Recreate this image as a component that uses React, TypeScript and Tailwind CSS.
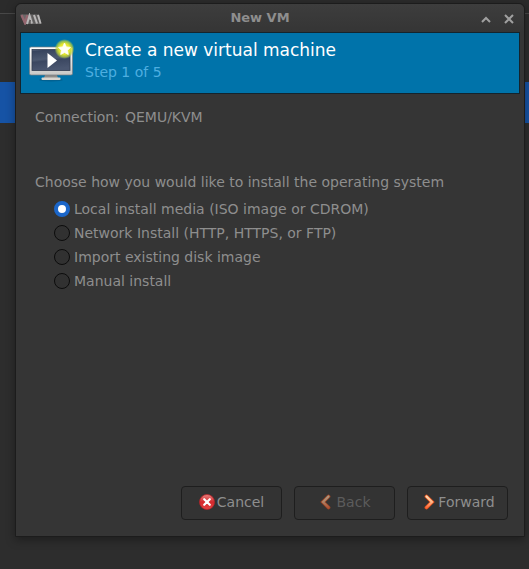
import React, { useState } from 'react';

const INSTALL_METHODS = [
  { id: 'local', label: 'Local install media (ISO image or CDROM)' },
  { id: 'network', label: 'Network Install (HTTP, HTTPS, or FTP)' },
  { id: 'import', label: 'Import existing disk image' },
  { id: 'manual', label: 'Manual install' },
];

const VmLogo = () => (
  <svg width="22" height="12" viewBox="0 0 22 12" aria-hidden="true">
    <path d="M0.500 1.500H19L21.500 11H4.500Z" fill="#6a6868" />
    <path d="M1.500 2L5 10L7.500 2" fill="none" stroke="#94666f" strokeWidth="2.400" />
    <path d="M7 11L9.500 2.500L12 10.500M14 2L17 10.500M18 2L20.500 10.500" fill="none" stroke="#b9b7b7" strokeWidth="2" />
    <path d="M9.500 11L10.500 7M12 2L14.500 10.500M16 2L19 10.500" fill="none" stroke="#5a5858" strokeWidth="1" />
  </svg>
);

const MonitorIcon = () => (
  <svg width="48" height="48" viewBox="0 0 48 48" className="shrink-0" aria-hidden="true">
    <defs>
      <linearGradient id="screen" x1="0" y1="0" x2="0.2" y2="1">
        <stop offset="0" stopColor="#5f6b82" />
        <stop offset="0.1" stopColor="#37445e" />
        <stop offset="0.5" stopColor="#4c5971" />
        <stop offset="0.6" stopColor="#3b4761" />
        <stop offset="1" stopColor="#4a5670" />
      </linearGradient>
      <linearGradient id="bezel" x1="0" y1="0" x2="0" y2="1">
        <stop offset="0" stopColor="#ffffff" />
        <stop offset="1" stopColor="#c8c8c6" />
      </linearGradient>
      <radialGradient id="glow">
        <stop offset="0" stopColor="#f7f45a" />
        <stop offset="0.55" stopColor="#e0e52c" />
        <stop offset="0.8" stopColor="#bfd53a" stopOpacity="0.7" />
        <stop offset="1" stopColor="#9cc850" stopOpacity="0" />
      </radialGradient>
    </defs>
    <ellipse cx="24" cy="41" rx="12" ry="1.500" fill="#034f78" opacity="0.5" />
    <path d="M18 36H30L31 39H17Z" fill="#8c8c8a" />
    <rect x="14.500" y="38.500" width="19" height="2.500" rx="1" fill="#d9d5cf" />
    <rect x="2.500" y="8" width="43" height="28" rx="1.500" fill="url(#bezel)" stroke="#777d83" strokeWidth="0.700" />
    <rect x="5" y="10.500" width="38" height="21" fill="url(#screen)" stroke="#323c50" strokeWidth="0.800" />
    <path d="M20.500 14L30 21.500L20.500 29Z" fill="#fff" />
    <circle cx="37.500" cy="10" r="10" fill="url(#glow)" />
    <path d="M37.500 4L39.300 7.900L43.500 8.400L40.500 11.300L41.300 15.500L37.500 13.500L33.700 15.500L34.500 11.300L31.500 8.400L35.700 7.900Z" fill="#fffff4" stroke="#fffff4" strokeWidth="0.800" strokeLinejoin="round" />
  </svg>
);

const CancelIcon = () => (
  <svg width="16" height="16" viewBox="0 0 16 16" aria-hidden="true">
    <defs>
      <linearGradient id="cancel-red" x1="0" y1="0" x2="0" y2="1">
        <stop offset="0" stopColor="#ea8481" />
        <stop offset="0.5" stopColor="#d3282c" />
        <stop offset="1" stopColor="#e64444" />
      </linearGradient>
    </defs>
    <circle cx="8" cy="8" r="7.500" fill="url(#cancel-red)" stroke="#b42329" strokeWidth="0.800" />
    <path d="M5.200 5.200L10.800 10.800M10.800 5.200L5.200 10.800" stroke="#fff" strokeWidth="2.200" strokeLinecap="round" />
  </svg>
);

const ArrowIcon = ({ back = false }: { back?: boolean }) => (
  <svg width="16" height="16" viewBox="0 0 16 16" aria-hidden="true">
    <defs>
      <linearGradient id={back ? 'arrow-back' : 'arrow-forward'} x1="0" y1="0" x2="0" y2="1">
        <stop offset="0" stopColor="#ffd9b0" />
        <stop offset="0.5" stopColor="#ffb98a" />
        <stop offset="1" stopColor="#ff6a3a" />
      </linearGradient>
    </defs>
    <path d={back ? 'M9.500 2.500L4 8L9.500 13.500' : 'M6.500 2.500L12 8L6.500 13.500'} fill="none" stroke="#e2501c" strokeWidth="3.800" strokeLinecap="round" />
    <path d={back ? 'M9.500 2.500L4 8L9.500 13.500' : 'M6.500 2.500L12 8L6.500 13.500'} fill="none" stroke={back ? 'url(#arrow-back)' : 'url(#arrow-forward)'} strokeWidth="2.200" strokeLinecap="round" />
  </svg>
);

const App = () => {
  const [method, setMethod] = useState('local');

  const buttonClass =
    'flex h-[34px] w-[101px] items-center justify-center gap-0.5 rounded border border-[#1e1e1e] bg-[#333333] pb-0.5';

  return (
    <div className="relative flex min-h-screen flex-col bg-[#2d2d2d] pt-[3px] pr-1 pb-8 pl-[15px] font-['DejaVu_Sans',sans-serif] text-sm text-[#8e8e8e]">
      {/* the manager window behind the dialog */}
      <div className="absolute inset-0 flex flex-col" aria-hidden="true">
        <div className="h-3.5 border-b border-[#484848] bg-[#2b2b2b]" />
        <div className="mt-[68px] h-[41px] bg-[#1653a5]" />
      </div>

      <main className="relative flex flex-1 flex-col rounded-t-md border border-[#1c1c1c] bg-[#353535] shadow-[0_3px_10px_rgba(0,0,0,0.35)]">
        <header className="flex h-7 items-center rounded-t-md bg-linear-to-b from-[#3d3d3d] to-[#353535] px-1 pt-px">
          <VmLogo />
          <h1 className="flex-1 text-center text-[13px] font-bold">New VM</h1>
          <div className="flex gap-[7px] pr-[3px]">
            <button type="button" aria-label="Roll up" className="flex size-4 items-center justify-center">
              <svg width="12" height="12" viewBox="0 0 12 12" fill="none" stroke="#a0a0a0" strokeWidth="2">
                <path d="M2 9L6 5L10 9" />
              </svg>
            </button>
            <button type="button" aria-label="Close" className="flex size-4 items-center justify-center">
              <svg width="12" height="12" viewBox="0 0 12 12" fill="none" stroke="#a0a0a0" strokeWidth="2">
                <path d="M2 2L10 10M10 2L2 10" />
              </svg>
            </button>
          </div>
        </header>

        <section className="mx-1 flex h-[62px] items-center gap-2.5 border border-[#14242d] bg-[#0073aa] px-1.5">
          <MonitorIcon />
          <div className="pb-1.5">
            <h2 className="text-[17px] leading-6 text-white">Create a new virtual machine</h2>
            <p className="leading-5 text-[#4eaee0]">Step 1 of 5</p>
          </div>
        </section>

        <div className="flex flex-1 flex-col px-4 pt-[11px] pb-4">
          <p className="flex gap-1.5 pl-[3px] leading-6">
            <span>Connection:</span>
            <span>QEMU/KVM</span>
          </p>

          <fieldset className="mt-[41px] pl-[3px]">
            <legend className="leading-6">Choose how you would like to install the operating system</legend>
            <div className="mt-[3px] flex flex-col pl-[19px]">
              {INSTALL_METHODS.map(item => (
                <label key={item.id} className="flex h-6 items-center gap-1">
                  <input
                    type="radio"
                    name="install-method"
                    value={item.id}
                    checked={method === item.id}
                    onChange={() => setMethod(item.id)}
                    className="size-4 appearance-none rounded-full border border-[#0c0c0c] bg-[#313131] checked:border-4 checked:border-[#1b66c9] checked:bg-white"
                  />
                  {item.label}
                </label>
              ))}
            </div>
          </fieldset>

          <footer className="mt-auto flex justify-end gap-3">
            <button type="button" className={buttonClass}>
              <CancelIcon />
              Cancel
            </button>
            <button type="button" disabled className={`${buttonClass} text-[#5c5c5c]`}>
              <span className="opacity-60"><ArrowIcon back /></span>
              Back
            </button>
            <button type="button" className={buttonClass}>
              <ArrowIcon />
              Forward
            </button>
          </footer>
        </div>
      </main>
    </div>
  );
};

export default App;
